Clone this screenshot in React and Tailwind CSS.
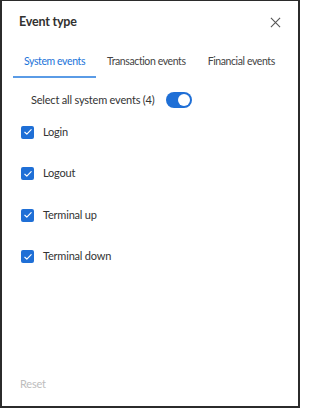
import React, { useState } from "react";

const EVENTS = ["Login", "Logout", "Terminal up", "Terminal down"];
const TABS = ["System events", "Transaction events", "Financial events"];

function CheckBox({ checked, onClick }) {
  return (
    <button
      type="button"
      onClick={onClick}
      className={
        "w-[13px] h-[13px] rounded-[2px] flex items-center justify-center " +
        (checked ? "bg-[#1f6fd6]" : "border border-[#777] bg-white")
      }
    >
      {checked && (
        <svg viewBox="0 0 12 12" className="w-[10px] h-[10px]">
          <path d="M2.2 6.3l2.4 2.3 5.2-5.4" fill="none" stroke="#fff" strokeWidth="1.4" strokeLinecap="round" strokeLinejoin="round" />
        </svg>
      )}
    </button>
  );
}

export default function App() {
  const [tab, setTab] = useState(0);
  const [checked, setChecked] = useState([true, true, true, true]);
  const allOn = checked.every(Boolean);

  const toggleAll = () => setChecked(checked.map(() => !allOn));

  return (
    <div
      className="w-[300px] h-[408px] bg-white border-t border-l-2 border-r-2 border-b-2 border-[#2b2b2b] flex flex-col text-[#323130] tracking-[-0.2px]"
      style={{ fontFamily: 'Lato, "Noto Sans", sans-serif' }}
    >
      {/* Header */}
      <div className="flex items-center justify-between pl-[17px] pr-[17px] pt-[12px] h-[31px]">
        <h2 className="text-[12.5px] font-bold leading-none">Event type</h2>
        <button type="button" className="text-[#555]">
          <svg viewBox="0 0 12 12" className="w-[11px] h-[11px]">
            <path d="M1 1l10 10M11 1L1 11" stroke="currentColor" strokeWidth="1.2" fill="none" />
          </svg>
        </button>
      </div>

      {/* Tabs */}
      <div className="flex pl-[11px] mt-[21px]">
        {TABS.map((t, i) => (
          <button
            key={t}
            type="button"
            onClick={() => setTab(i)}
            className={
              "px-[11px] pb-[7px] text-[10.5px] tracking-[-0.4px] leading-[16px] whitespace-nowrap border-b-2 " +
              (tab === i ? "text-[#1a73d9] border-[#5a9be6]" : "text-[#444] border-transparent")
            }
          >
            {t}
          </button>
        ))}
      </div>

      {/* Select all */}
      <div className="flex items-center gap-[12px] pl-[29px] mt-[14px] h-[16px]">
        <span className="text-[11px] text-[#333] whitespace-nowrap">Select all system events (4)</span>
        <button
          type="button"
          onClick={toggleAll}
          className={
            "w-[26px] h-[16px] rounded-full flex items-center px-[2px] " +
            (allOn ? "bg-[#1f6fd6] justify-end" : "bg-[#bbb] justify-start")
          }
        >
          <span className="w-[12px] h-[12px] rounded-full bg-white" />
        </button>
      </div>

      {/* Event list */}
      <div className="flex flex-col gap-[27.5px] pl-[19px] mt-[17px]">
        {EVENTS.map((e, i) => (
          <label key={e} className="flex items-center gap-[9px] h-[14px]">
            <CheckBox
              checked={checked[i]}
              onClick={() => setChecked(checked.map((c, j) => (j === i ? !c : c)))}
            />
            <span className="text-[11px] text-[#333]">{e}</span>
          </label>
        ))}
      </div>

      {/* Footer */}
      <div className="mt-auto pl-[18px] pb-[12px]">
        <button type="button" className="text-[11px] text-[#bdbdbd]">
          Reset
        </button>
      </div>
    </div>
  );
}
